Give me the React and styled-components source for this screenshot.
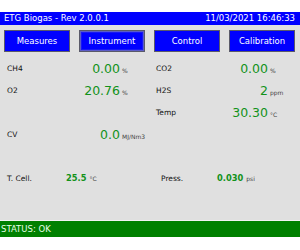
import React from "react";
import styled, { createGlobalStyle } from "styled-components";

const GlobalStyle = createGlobalStyle`
  html, body {
    margin: 0;
    padding: 0;
    background: #ffffff;
  }
  body {
    font-family: "DejaVu Sans", "Liberation Sans", sans-serif;
  }
`;

const Screen = styled.div`
  width: 300px;
  height: 250px;
  padding-top: 12px;
  box-sizing: border-box;
  display: flex;
  flex-direction: column;
`;

const TitleBar = styled.div`
  height: 13px;
  background: #0000ff;
  color: #ffffff;
  font-size: 8.5px;
  line-height: 13px;
  display: flex;
  justify-content: space-between;
  padding: 0 5px 0 4px;
`;

const Panel = styled.div`
  height: 196px;
  background: #e0e0e0;
  border-bottom: 1px solid #f2f2f2;
  box-sizing: border-box;
  display: flex;
  flex-direction: column;
`;

const Menu = styled.div`
  display: grid;
  grid-template-columns: repeat(4, 66px);
  column-gap: 9px;
  padding: 5px 0 0 4px;
`;

const MenuButton = styled.button`
  height: 22px;
  margin: 0;
  padding: 0;
  background: #0000ff;
  color: #ffffff;
  font-family: "DejaVu Sans", "Liberation Sans", sans-serif;
  font-size: 8.5px;
  border: 1px solid #5a5a6a;
  box-shadow: ${(p) =>
    p.$active ? "inset 0 0 0 1px #5c5cc8, inset 0 0 0 2px #1818f4" : "none"};
  cursor: pointer;
`;

const Readings = styled.div`
  display: grid;
  grid-template-columns: 149px 149px;
  grid-auto-rows: 22px;
  padding: 5px 0 0 7px;
`;

const Cell = styled.div`
  display: flex;
  align-items: center;
  grid-column: ${(p) => p.$col};
  grid-row: ${(p) => p.$row};
`;

const Label = styled.span`
  width: ${(p) => p.$w}px;
  font-size: 7.5px;
  color: #111111;
`;

const Reading = styled.span`
  display: flex;
  align-items: baseline;
`;

const Value = styled.span`
  width: ${(p) => p.$w}px;
  text-align: right;
  font-size: 12.5px;
  color: #12921a;
`;

const Unit = styled.span`
  margin-left: ${(p) => p.$gap ?? 2}px;
  font-size: 6px;
  color: #444444;
`;

const Extras = styled.div`
  display: grid;
  grid-template-columns: 154px 130px;
  height: 22px;
  margin-top: 22px;
  padding-left: 7px;
`;

const SmallValue = styled.span`
  font-size: 8.3px;
  font-weight: bold;
  color: #12921a;
`;

const StatusBar = styled.div`
  height: 16px;
  background: #008000;
  color: #e8ffe8;
  font-size: 8.5px;
  line-height: 16px;
  padding-left: 1px;
`;

const readings = [
  { label: "CH4", value: "0.00", unit: "%", col: 1, row: 1 },
  { label: "O2", value: "20.76", unit: "%", col: 1, row: 2 },
  { label: "CV", value: "0.0", unit: "MJ/Nm3", col: 1, row: 4 },
  { label: "CO2", value: "0.00", unit: "%", col: 2, row: 1 },
  { label: "H2S", value: "2", unit: "ppm", col: 2, row: 2 },
  { label: "Temp", value: "30.30", unit: "°C", col: 2, row: 3 },
];

export default function App() {
  return (
    <>
      <GlobalStyle />
      <Screen>
        <TitleBar>
          <span>ETG Biogas - Rev 2.0.0.1</span>
          <span>11/03/2021 16:46:33</span>
        </TitleBar>
        <Panel>
          <Menu>
            <MenuButton>Measures</MenuButton>
            <MenuButton $active>Instrument</MenuButton>
            <MenuButton>Control</MenuButton>
            <MenuButton>Calibration</MenuButton>
          </Menu>
          <Readings>
            {readings.map((r) => (
              <Cell key={r.label} $col={r.col} $row={r.row}>
                <Label $w={60}>{r.label}</Label>
                <Reading>
                  <Value $w={r.col === 1 ? 53 : 52}>{r.value}</Value>
                  <Unit>{r.unit}</Unit>
                </Reading>
              </Cell>
            ))}
          </Readings>
          <Extras>
            <Cell>
              <Label $w={59}>T. Cell.</Label>
              <Reading>
                <SmallValue>25.5</SmallValue>
                <Unit $gap={3}>°C</Unit>
              </Reading>
            </Cell>
            <Cell>
              <Label $w={56}>Press.</Label>
              <Reading>
                <SmallValue>0.030</SmallValue>
                <Unit $gap={3}>psi</Unit>
              </Reading>
            </Cell>
          </Extras>
        </Panel>
        <StatusBar>STATUS: OK</StatusBar>
      </Screen>
    </>
  );
}
